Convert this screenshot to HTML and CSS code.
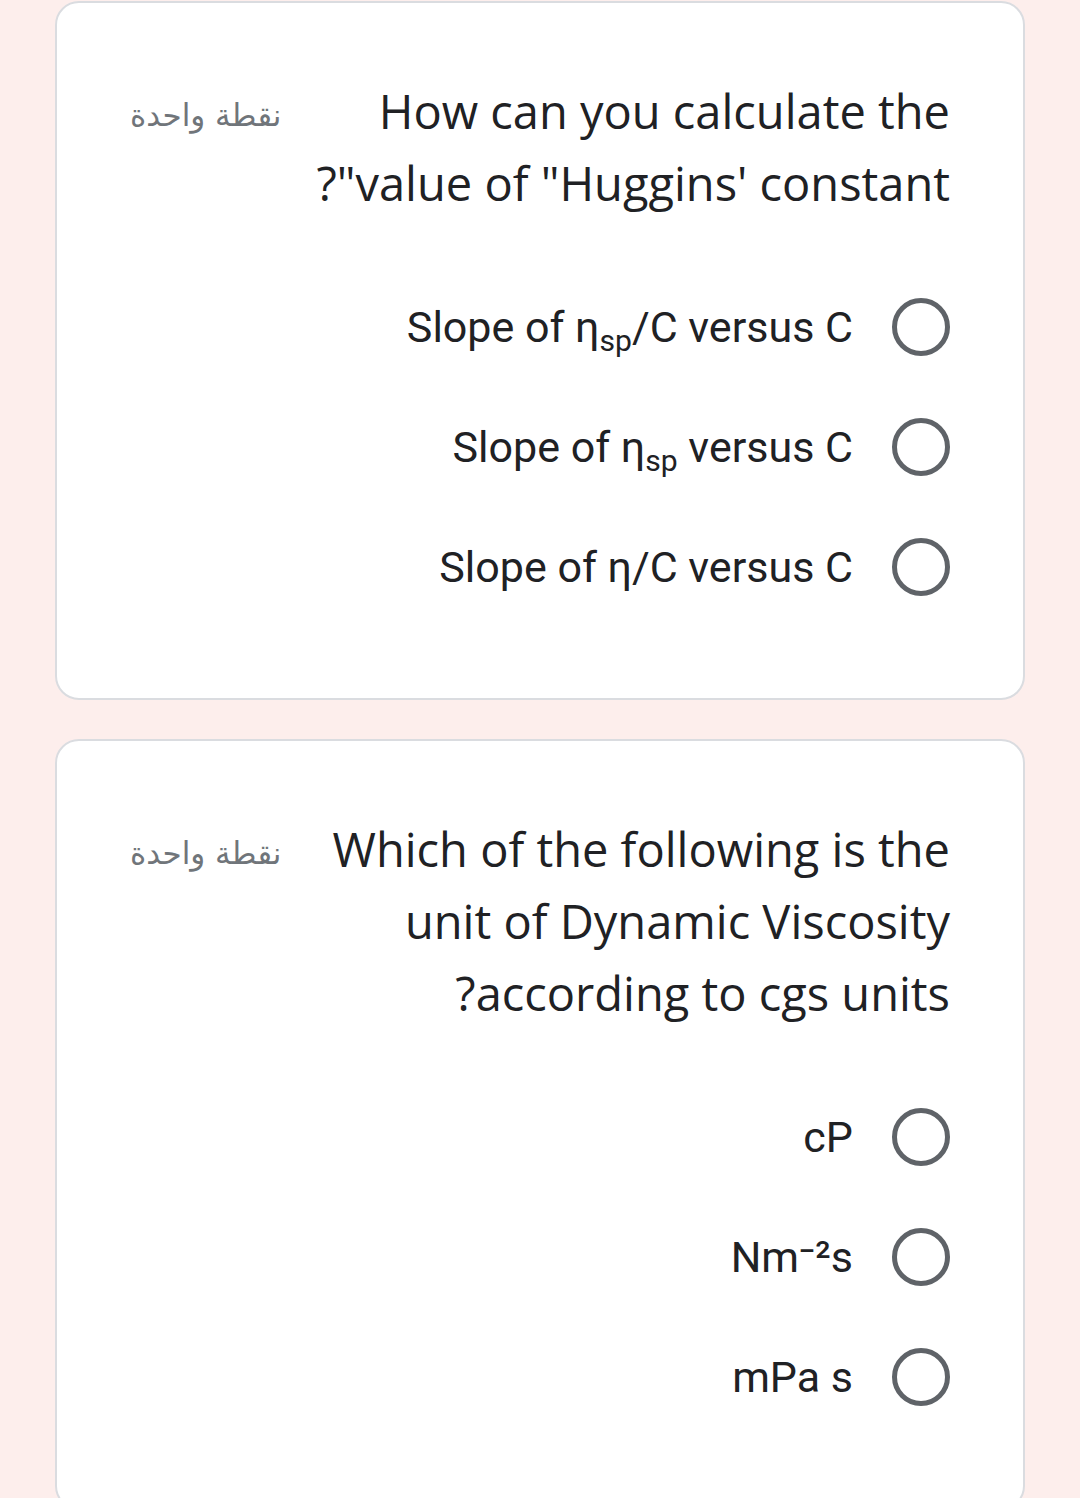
FILE: index.html
```html
<!DOCTYPE html>
<html lang="ar">
<head>
<meta charset="utf-8">
<title>Quiz</title>
<link rel="stylesheet" href="styles.css">
</head>
<body>
<main class="page">
  <section class="card" dir="rtl">
    <div class="q-row">
      <div class="q-text">How can you calculate the<br>value of "Huggins' constant"?</div>
      <div class="points">نقطة واحدة</div>
    </div>
    <ul class="options">
      <li class="option"><span class="radio"></span><span class="opt-label" dir="ltr">Slope of η<sub>sp</sub>/C versus C</span></li>
      <li class="option"><span class="radio"></span><span class="opt-label" dir="ltr">Slope of η<sub>sp</sub> versus C</span></li>
      <li class="option"><span class="radio"></span><span class="opt-label" dir="ltr">Slope of η/C versus C</span></li>
    </ul>
  </section>
  <section class="card" dir="rtl">
    <div class="q-row">
      <div class="q-text">Which of the following is the<br>unit of Dynamic Viscosity<br>according to cgs units?</div>
      <div class="points">نقطة واحدة</div>
    </div>
    <ul class="options">
      <li class="option"><span class="radio"></span><span class="opt-label" dir="ltr">cP</span></li>
      <li class="option"><span class="radio"></span><span class="opt-label" dir="ltr">Nm⁻²s</span></li>
      <li class="option"><span class="radio"></span><span class="opt-label" dir="ltr">mPa s</span></li>
    </ul>
  </section>
</main>
</body>
</html>
```
FILE: styles.css
```css
html, body {
  margin: 0;
  padding: 0;
}
body {
  background: #fdeeec;
  font-family: "Open Sans", "DejaVu Sans", sans-serif;
  color: #202124;
}
.page {
  padding-top: 1px;
  display: flex;
  flex-direction: column;
  gap: 39px;
}
.card {
  box-sizing: border-box;
  margin-left: 55px;
  width: 970px;
  background: #ffffff;
  border: 2px solid #dadce0;
  border-radius: 24px;
  padding: 72px 73px 71px 73px;
}
.q-row {
  display: flex;
  align-items: flex-start;
  justify-content: space-between;
}
.q-text {
  font-family: "Open Sans", sans-serif;
  font-size: 47px;
  line-height: 72px;
  color: #202124;
}
.points {
  font-family: "DejaVu Sans", "Noto Sans", sans-serif;
  font-size: 31px;
  line-height: 72px;
  color: #70757a;
  padding-top: 4px;
}
.options {
  list-style: none;
  margin: 48px 0 0 0;
  padding: 0;
}
.option {
  display: flex;
  align-items: center;
  gap: 39px;
  height: 120px;
}
.radio {
  box-sizing: border-box;
  width: 58px;
  height: 58px;
  border: 5px solid #5f6368;
  border-radius: 50%;
  flex: none;
}
.opt-label {
  font-family: "Roboto", sans-serif;
  font-size: 43px;
  line-height: 52px;
  color: #202124;
}
.opt-label sub {
  font-size: 0.7em;
  vertical-align: -0.3em;
  line-height: 0;
}
```
